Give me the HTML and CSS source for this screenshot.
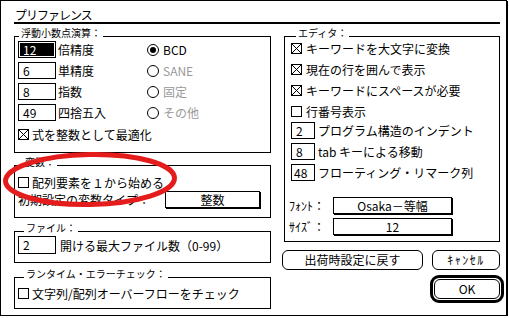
FILE: index.html
```html
<!DOCTYPE html>
<html lang="ja">
<head>
  <meta charset="UTF-8" />
  <title>プリファレンス</title>
  <link rel="stylesheet" href="styles.css">
</head>
<body>
  <div class="dialog">
    <div class="title">プリファレンス</div>

    <div class="columns">
      <div class="col-left">
        <div class="group g-float">
          <div class="group-title">浮動小数点演算：</div>
          <div class="float-grid">
            <div class="field sel"><span>12</span></div>
            <div class="lbl">倍精度</div>
            <div class="opt"><span class="radio on"></span>BCD</div>

            <div class="field">6</div>
            <div class="lbl">単精度</div>
            <div class="opt dim"><span class="radio"></span>SANE</div>

            <div class="field">8</div>
            <div class="lbl">指数</div>
            <div class="opt dim"><span class="radio"></span>固定</div>

            <div class="field">49</div>
            <div class="lbl">四捨五入</div>
            <div class="opt dim"><span class="radio"></span>その他</div>
          </div>
          <div class="check">
            <svg class="cb" width="11" height="11" viewBox="0 0 11 11"><rect x="0.5" y="0.5" width="10" height="10"/><path d="M0 0L11 11M11 0L0 11"/></svg>
            式を整数として最適化
          </div>
        </div>

        <div class="group g-var">
          <div class="group-title">変数：</div>
          <div class="check">
            <svg class="cb" width="11" height="11" viewBox="0 0 11 11"><rect x="0.5" y="0.5" width="10" height="10"/></svg>
            配列要素を１から始める
          </div>
          <div class="type-row">
            <span class="type-label">初期設定の変数タイプ：</span>
            <div class="popup type-popup">整数</div>
          </div>
        </div>

        <div class="group g-file">
          <div class="group-title">ファイル：</div>
          <div class="field-row">
            <div class="field big">2</div>
            <span>開ける最大ファイル数（0-99）</span>
          </div>
        </div>

        <div class="group g-run">
          <div class="group-title">ランタイム・エラーチェック：</div>
          <div class="check">
            <svg class="cb" width="11" height="11" viewBox="0 0 11 11"><rect x="0.5" y="0.5" width="10" height="10"/></svg>
            文字列/配列オーバーフローをチェック
          </div>
        </div>
      </div>

      <div class="col-right">
        <div class="group g-editor">
          <div class="group-title">エディタ：</div>
          <div class="editor-checks">
            <div class="check">
              <svg class="cb" width="11" height="11" viewBox="0 0 11 11"><rect x="0.5" y="0.5" width="10" height="10"/><path d="M0 0L11 11M11 0L0 11"/></svg>
              キーワードを大文字に変換
            </div>
            <div class="check">
              <svg class="cb" width="11" height="11" viewBox="0 0 11 11"><rect x="0.5" y="0.5" width="10" height="10"/><path d="M0 0L11 11M11 0L0 11"/></svg>
              現在の行を囲んで表示
            </div>
            <div class="check">
              <svg class="cb" width="11" height="11" viewBox="0 0 11 11"><rect x="0.5" y="0.5" width="10" height="10"/><path d="M0 0L11 11M11 0L0 11"/></svg>
              キーワードにスペースが必要
            </div>
            <div class="check">
              <svg class="cb" width="11" height="11" viewBox="0 0 11 11"><rect x="0.5" y="0.5" width="10" height="10"/></svg>
              行番号表示
            </div>
          </div>

          <div class="editor-fields">
            <div class="field-row"><div class="field small">2</div><span>プログラム構造のインデント</span></div>
            <div class="field-row"><div class="field small">8</div><span>tab キーによる移動</span></div>
            <div class="field-row"><div class="field small tight">48</div><span>フローティング・リマーク列</span></div>
          </div>

          <div class="font-rows">
            <div class="font-row"><span class="font-label">ﾌｫﾝﾄ：</span><div class="popup font-popup">Osaka－等幅</div></div>
            <div class="font-row"><span class="font-label">ｻｲｽﾞ：</span><div class="popup font-popup">12</div></div>
          </div>
        </div>

        <div class="btn-row">
          <button class="btn btn-reset">出荷時設定に戻す</button>
          <button class="btn btn-cancel">ｷｬﾝｾﾙ</button>
        </div>
        <div class="ok-row">
          <div class="default-ring"><button class="btn btn-ok">OK</button></div>
        </div>
      </div>
    </div>

    <!-- annotation drawn over the dialog -->
    <svg class="mark" width="509" height="318" viewBox="0 0 509 318">
      <ellipse cx="90" cy="179.5" rx="84.5" ry="25" transform="rotate(-1 90 179.5)"/>
    </svg>
  </div>
</body>
</html>
```

FILE: styles.css
```css
body {
  margin: 0;
  background: #fff;
  color: #000;
  font-family: "Noto Sans CJK JP", sans-serif;
  font-size: 12px;
}
.dialog {
  position: relative;
  box-sizing: border-box;
  width: 507px;
  height: 316px;
  border: 1px solid #000;
  box-shadow: 1px 1px 0 #000;
  padding: 7px 6px 0 13px;
}
.title {
  line-height: 14px;
  padding-left: 1px;
  letter-spacing: -1px;
  border-bottom: 2px solid #000;
}
.columns {
  display: flex;
  gap: 13px;
  margin-top: 12px;
}
.col-left {
  width: 257px;
}
.col-right {
  width: 216px;
}

/* group boxes */
.group {
  border: 1px solid #000;
  padding: 0 3px;
}
.group-title {
  display: table;
  margin: -10px 0 0 1px;
  padding: 0 2px;
  background: #fff;
  font-size: 10px;
  line-height: 11px;
}
.g-float {
  padding-bottom: 11px;
}
.g-var {
  margin-top: 12px;
  padding-bottom: 9px;
}
.g-var .group-title {
  margin-left: 5px;
}
.g-file {
  margin-top: 13px;
  padding-bottom: 8px;
}
.g-file .group-title,
.g-run .group-title {
  margin-left: 6px;
}
.g-run {
  margin-top: 14px;
  padding-bottom: 8px;
}
.g-editor {
  padding: 0 6px 5px;
}
.g-editor .group-title {
  margin-left: 5px;
}

/* controls */
.field {
  box-sizing: border-box;
  height: 17px;
  border: 1px solid #000;
  padding-left: 4px;
  line-height: 15px;
}
.field.sel {
  padding: 1px;
}
.field.sel span {
  display: block;
  height: 13px;
  line-height: 13px;
  padding-left: 3px;
  background: #000;
  color: #fff;
}
.field.big {
  width: 38px;
  height: 18px;
  line-height: 16px;
}
.field.small {
  width: 24px;
}
.field.tight {
  padding-left: 2px;
}
.cb {
  flex: none;
  shape-rendering: crispEdges;
}
.cb rect {
  fill: #fff;
  stroke: #000;
}
.cb path {
  stroke: #000;
  stroke-width: 1;
}
.check {
  display: flex;
  align-items: center;
  gap: 3px;
  height: 13px;
  line-height: 13px;
  white-space: nowrap;
}
.radio {
  box-sizing: border-box;
  width: 12px;
  height: 12px;
  border: 1px solid #000;
  border-radius: 50%;
  display: grid;
  place-items: center;
  flex: none;
}
.radio.on::after {
  content: "";
  width: 6px;
  height: 6px;
  border-radius: 50%;
  background: #000;
}
.popup {
  box-sizing: border-box;
  height: 17px;
  border: 1px solid #000;
  box-shadow: 1px 1px 0 #000;
  text-align: center;
  line-height: 15px;
}

/* float box */
.float-grid {
  display: grid;
  grid-template-columns: 38px 91px auto;
  grid-auto-rows: 17px;
  row-gap: 4px;
  align-items: center;
  margin-top: 3px;
  line-height: 15px;
}
.lbl {
  padding-left: 2px;
}
.opt {
  display: flex;
  align-items: center;
  gap: 4px;
}
.opt.dim {
  color: #999;
}
.g-float .check {
  margin-top: 7px;
}

/* variable box */
.g-var .check {
  margin-top: 9px;
}
.type-row {
  display: flex;
  align-items: center;
  height: 18px;
  margin-top: 1px;
}
.type-label {
  width: 147px;
  white-space: nowrap;
}
.type-popup {
  width: 95px;
}

/* file box */
.field-row {
  display: flex;
  align-items: center;
  gap: 4px;
  white-space: nowrap;
}
.g-file .field-row {
  margin-top: 3px;
}
.g-run .check {
  margin-top: 8px;
}

/* editor box */
.editor-checks {
  display: flex;
  flex-direction: column;
  gap: 8px;
  margin-top: 4px;
}
.editor-checks .check {
  gap: 4px;
}
.editor-fields {
  display: flex;
  flex-direction: column;
  gap: 4px;
  margin-top: 4px;
}
.editor-fields .field-row {
  gap: 3px;
}
.font-rows {
  display: flex;
  flex-direction: column;
  gap: 3px;
  margin-top: 16px;
}
.font-row {
  display: flex;
  align-items: flex-start;
  height: 18px;
}
.font-label {
  width: 42px;
  margin-left: -2px;
  line-height: 17px;
  font-size: 12px;
  white-space: nowrap;
}
.font-popup {
  width: 119px;
  margin-left: 2px;
}

/* buttons */
.btn {
  box-sizing: border-box;
  height: 20px;
  margin: 0;
  padding: 0;
  border: 1px solid #000;
  border-radius: 6px;
  background: #fff;
  color: #000;
  font: inherit;
  line-height: 18px;
  text-align: center;
}
.btn-row {
  display: flex;
  justify-content: space-between;
  margin: 8px 0 0 -2px;
}
.btn-reset {
  width: 141px;
}
.btn-cancel {
  width: 68px;
  letter-spacing: 1.5px;
}
.ok-row {
  display: flex;
  justify-content: flex-end;
  margin: 5px -4px 0 0;
}
.default-ring {
  box-sizing: border-box;
  width: 74px;
  height: 28px;
  border: 3px solid #000;
  border-radius: 9px;
  padding: 1px;
}
.btn-ok {
  display: block;
  width: 66px;
}

/* red annotation ring */
.mark {
  position: absolute;
  left: -1px;
  top: -1px;
  pointer-events: none;
}
.mark ellipse {
  fill: none;
  stroke: #e51c1c;
  stroke-width: 5;
}
```
